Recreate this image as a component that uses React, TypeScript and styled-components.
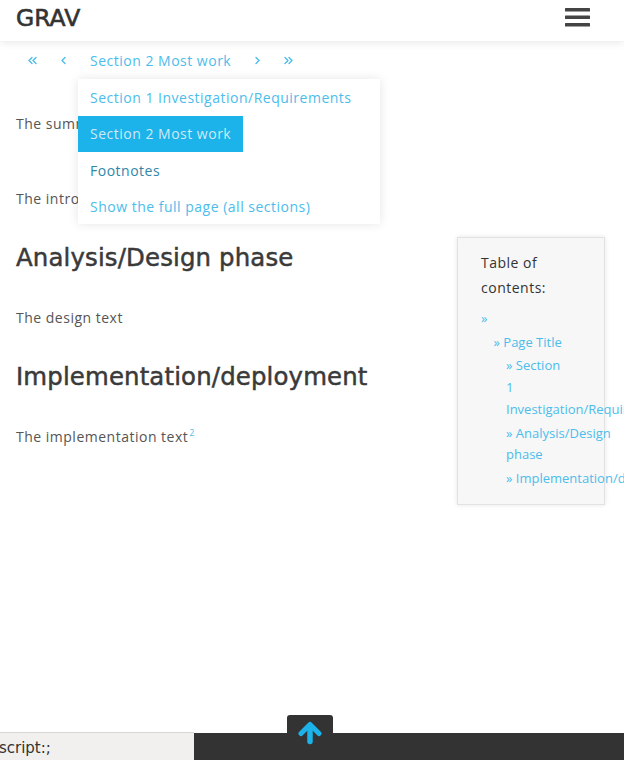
import React from "react";
import styled, { createGlobalStyle } from "styled-components";

const LINK = "#4cbdeb";
const ACCENT = "#1bb3e9";

const GlobalStyle = createGlobalStyle`
  html, body { margin: 0; padding: 0; background: #fff; overflow: hidden; }
  body { font-family: "Open Sans", "Liberation Sans", sans-serif; }
  *, *::before, *::after { box-sizing: border-box; }
`;

const Page = styled.div`
  position: relative;
  width: 624px;
  height: 768px;
  overflow: hidden;
  display: flex;
  flex-direction: column;
  font-family: "Open Sans", "Liberation Sans", sans-serif;
  font-size: 14px;
  letter-spacing: 0.5px;
  color: #555;
`;

const Header = styled.header`
  position: relative;
  z-index: 2;
  flex: none;
  height: 41px;
  display: flex;
  align-items: center;
  justify-content: space-between;
  padding: 0 34px 5px 16px;
  background: #fff;
  box-shadow: 0 2px 8px rgba(0, 0, 0, 0.09);
`;

const Logo = styled.a`
  font-family: "DejaVu Sans", "Liberation Sans", sans-serif;
  font-size: 23.5px;
  line-height: 24px;
  font-weight: 400;
  letter-spacing: 0;
  color: #333;
  text-decoration: none;
  -webkit-text-stroke: 0.6px #333;
`;

const MenuButton = styled.button`
  display: flex;
  padding: 0;
  border: 0;
  background: none;
  margin-bottom: 1px;
`;

const Pager = styled.nav`
  position: relative;
  z-index: 3;
  flex: none;
  height: 38px;
  display: flex;
  align-items: stretch;
  padding-left: 16px;
`;

const PagerLink = styled.a`
  display: flex;
  align-items: center;
  padding: 0 12px;
  color: ${LINK};
  text-decoration: none;
`;

const PagerMenu = styled.div`
  position: relative;
  display: flex;
`;

const Dropdown = styled.ul`
  position: absolute;
  top: 100%;
  left: 0;
  width: 302px;
  height: 145px;
  margin: 0;
  padding: 0;
  list-style: none;
  background: #fff;
  box-shadow: 0 0 10px rgba(0, 0, 0, 0.1);
  display: flex;
  flex-direction: column;
  align-items: flex-start;
`;

const DropItem = styled.a<{ $active?: boolean; $visited?: boolean }>`
  display: flex;
  align-items: center;
  height: 36.5px;
  padding: 0 12px;
  white-space: nowrap;
  text-decoration: none;
  background: ${(p) => (p.$active ? ACCENT : "transparent")};
  color: ${(p) => (p.$active ? "#cfe9f5" : p.$visited ? "#2f86a8" : LINK)};
`;

const Body = styled.div`
  flex: 1;
  display: grid;
  grid-template-columns: minmax(0, 1fr) 148px;
  align-items: start;
  padding: 0 19px 0 16px;
`;

const Article = styled.main`
  padding-top: 33px;
`;

const Para = styled.p`
  margin: 0;
  line-height: 24px;
  & + & {
    margin-top: 51px;
  }
`;

const Heading = styled.h2`
  margin: 32px 0 33px;
  font-family: "DejaVu Sans", "Liberation Sans", sans-serif;
  font-size: 24.4px;
  line-height: 30px;
  font-weight: 400;
  letter-spacing: 0.15px;
  color: #3a3a3a;
  -webkit-text-stroke: 0.5px #3a3a3a;
`;

const Sup = styled.sup`
  font-size: 9px;
  line-height: 0;
  color: ${LINK};
  margin-left: 1px;
`;

const Toc = styled.aside`
  margin-top: 158px;
  width: 148px;
  height: 268px;
  padding: 12px 39px 0 23px;
  background: #f7f7f7;
  border: 1px solid #e2e2e2;
  box-shadow: 0 0 5px rgba(0, 0, 0, 0.1);
`;

const TocTitle = styled.h4`
  margin: 0;
  font-size: 14px;
  line-height: 25px;
  font-weight: 500;
  color: #333;
`;

const TocList = styled.ul<{ $nested?: boolean }>`
  list-style: none;
  margin: ${(p) => (p.$nested ? "0" : "8px 0 0")};
  padding: 0 0 0 ${(p) => (p.$nested ? "12.5px" : "0")};
  font-size: 13px;
  line-height: 21.7px;
  letter-spacing: 0;
`;

const TocItem = styled.li`
  & + &,
  & > ul > &:first-child {
    margin-top: 2px;
  }
`;

const TocLink = styled.a`
  color: ${LINK};
  text-decoration: none;
`;

const Footer = styled.footer`
  flex: none;
  display: flex;
  flex-direction: column;
  align-items: center;
  margin-bottom: 8px;
`;

const ToTop = styled.a`
  width: 46px;
  height: 18px;
  margin-right: 4px;
  padding-top: 6px;
  display: flex;
  justify-content: center;
  align-items: flex-start;
  background: #333;
  border-radius: 3px 3px 0 0;
  & > svg {
    position: relative;
    z-index: 1;
    flex: none;
  }
`;

const Bar = styled.div`
  align-self: stretch;
  height: 27px;
  background: #333;
`;

const StatusBubble = styled.div`
  position: fixed;
  left: 0;
  bottom: 8px;
  width: 194px;
  height: 28px;
  display: flex;
  align-items: center;
  padding-top: 3px;
  overflow: hidden;
  white-space: nowrap;
  background: #f1f0ee;
  border-top: 1px solid #d6d6d6;
  font-family: "DejaVu Sans", sans-serif;
  font-size: 15px;
  letter-spacing: 0;
  color: #333;
`;

const StatusText = styled.span`
  margin-left: -32.5px;
`;

const Chevrons = ({ dir, double }: { dir: "left" | "right"; double?: boolean }) => {
  const w = double ? 9 : 5;
  const flip = dir === "right" ? `translate(${w} 0) scale(-1 1)` : undefined;
  return (
    <svg width={w} height="9" viewBox={`0 0 ${w} 9`} fill="none">
      <g transform={flip} stroke={LINK} strokeWidth="1.4" strokeLinecap="round" strokeLinejoin="round">
        <polyline points="4,1.5 1,4.5 4,7.5" />
        {double && <polyline points="8,1.5 5,4.5 8,7.5" />}
      </g>
    </svg>
  );
};

const Hamburger = () => (
  <svg width="25" height="20" viewBox="0 0 25 20">
    <rect x="0" y="0" width="25" height="3.6" rx="0.5" fill="#444" />
    <rect x="0" y="7.5" width="25" height="3.6" rx="0.5" fill="#444" />
    <rect x="0" y="15" width="25" height="3.6" rx="0.5" fill="#444" />
  </svg>
);

const ArrowUp = () => (
  <svg width="24" height="24" viewBox="0 0 24 24" fill="none">
    <polyline points="3,12.5 12,3.5 21,12.5" stroke={ACCENT} strokeWidth="5" strokeLinecap="round" strokeLinejoin="round" />
    <line x1="12" y1="5" x2="12" y2="20.5" stroke={ACCENT} strokeWidth="5.5" strokeLinecap="round" />
  </svg>
);

export default function App() {
  return (
    <>
      <GlobalStyle />
      <Page>
        <Header>
          <Logo href="#">GRAV</Logo>
          <MenuButton aria-label="Menu">
            <Hamburger />
          </MenuButton>
        </Header>

        <Pager>
          <PagerLink href="#"><Chevrons dir="left" double /></PagerLink>
          <PagerLink href="#"><Chevrons dir="left" /></PagerLink>
          <PagerMenu>
            <PagerLink href="#">Section 2 Most work</PagerLink>
            <Dropdown>
              <li><DropItem href="#">Section 1 Investigation/Requirements</DropItem></li>
              <li><DropItem href="#" $active>Section 2 Most work</DropItem></li>
              <li><DropItem href="#" $visited>Footnotes</DropItem></li>
              <li><DropItem href="#">Show the full page (all sections)</DropItem></li>
            </Dropdown>
          </PagerMenu>
          <PagerLink href="#"><Chevrons dir="right" /></PagerLink>
          <PagerLink href="#"><Chevrons dir="right" double /></PagerLink>
        </Pager>

        <Body>
          <Article>
            <Para>The summary text</Para>
            <Para>The introduction text</Para>
            <Heading>Analysis/Design phase</Heading>
            <Para>The design text</Para>
            <Heading>Implementation/deployment</Heading>
            <Para>
              The implementation text<Sup>2</Sup>
            </Para>
          </Article>
          <Toc>
            <TocTitle>Table of contents:</TocTitle>
            <TocList>
              <TocItem>
                <TocLink href="#">»</TocLink>
                <TocList $nested>
                  <TocItem>
                    <TocLink href="#">»&nbsp;Page Title</TocLink>
                    <TocList $nested>
                      <TocItem><TocLink href="#">»&nbsp;Section 1 Investigation/Requirements</TocLink></TocItem>
                      <TocItem><TocLink href="#">»&nbsp;Analysis/Design phase</TocLink></TocItem>
                      <TocItem><TocLink href="#">»&nbsp;Implementation/deployment</TocLink></TocItem>
                    </TocList>
                  </TocItem>
                </TocList>
              </TocItem>
            </TocList>
          </Toc>
        </Body>

        <Footer>
          <ToTop href="#" aria-label="Back to top">
            <ArrowUp />
          </ToTop>
          <Bar />
        </Footer>

        <StatusBubble>
          <StatusText>javascript:;</StatusText>
        </StatusBubble>
      </Page>
    </>
  );
}
